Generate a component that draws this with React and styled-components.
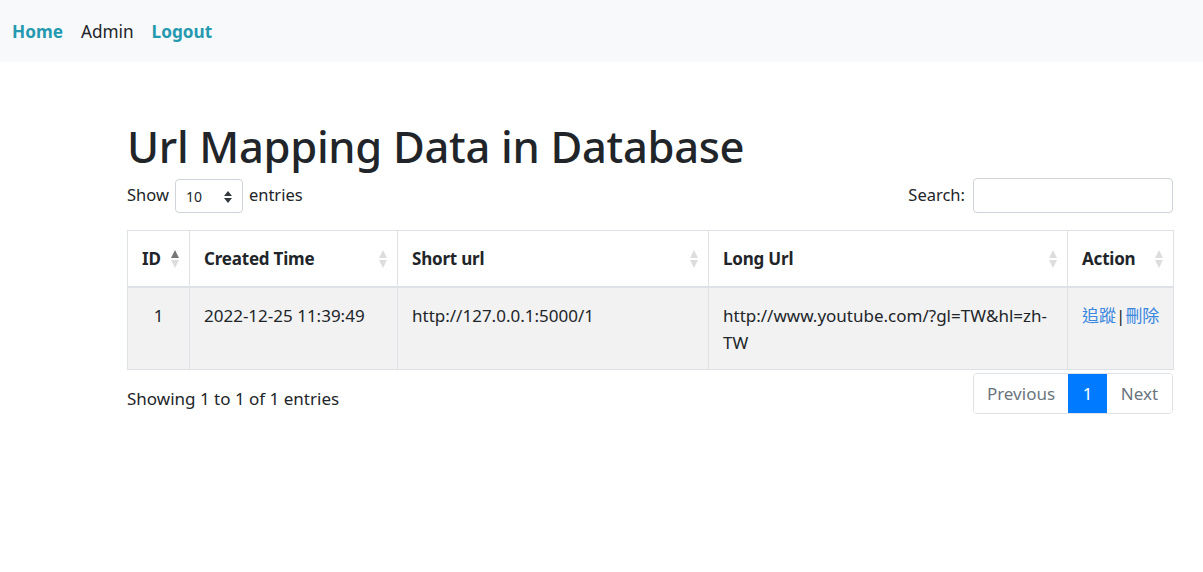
import React from 'react';
import styled, { createGlobalStyle } from 'styled-components';

const GlobalStyle = createGlobalStyle`
  body {
    margin: 0;
    font-family: "Noto Sans", "Noto Sans CJK TC", sans-serif;
    font-size: 16px;
    color: #212529;
    background: #fff;
  }
`;

const Navbar = styled.nav`
  display: flex;
  align-items: center;
  gap: 18px;
  height: 62px;
  padding: 0 12px;
  background: #f8f9fa;
`;

const NavLink = styled.a`
  font-size: 17.2px;
  font-weight: ${(p) => (p.active ? 400 : 700)};
  color: ${(p) => (p.active ? '#212529' : '#2599b0')};
  text-decoration: none;
`;

const Container = styled.main`
  padding: 58px 30px 0 127px;
`;

const Title = styled.h1`
  margin: 0 0 4px;
  font-size: 43.5px;
  font-weight: 500;
  line-height: 1.2;
  letter-spacing: -0.3px;
`;

const Controls = styled.div`
  display: flex;
  justify-content: space-between;
  align-items: center;
  margin-bottom: 17px;
`;

const Label = styled.label`
  display: flex;
  align-items: center;
  gap: 6px;
  font-size: 16.5px;
`;

const Select = styled.div`
  display: flex;
  align-items: center;
  justify-content: space-between;
  box-sizing: border-box;
  width: 68px;
  height: 34px;
  padding: 2px 10px 0 10px;
  border: 1px solid #ced4da;
  border-radius: 4px;
  font-size: 14px;
  margin-top: 2px;
`;

const Input = styled.input`
  box-sizing: border-box;
  width: 200px;
  height: 35px;
  border: 1px solid #ced4da;
  border-radius: 4px;
  margin: 2px 0 0 2px;
`;

const Table = styled.table`
  width: 100%;
  border-collapse: collapse;
  table-layout: fixed;
  border: 1px solid #dee2e6;
`;

const Th = styled.th`
  position: relative;
  height: 55px;
  padding: 0 14px;
  text-align: left;
  font-weight: 700;
  font-size: 17px;
  border: 1px solid #dee2e6;
  border-bottom: 2px solid #dee2e6;
  letter-spacing: -0.2px;
`;

const Td = styled.td`
  height: 82px;
  box-sizing: border-box;
  padding: 14px ${(p) => (p.tight ? 0 : 14)}px 0 14px;
  vertical-align: top;
  background: #f2f2f2;
  border: 1px solid #dee2e6;
  font-size: 17px;
  line-height: 27px;
  text-align: ${(p) => (p.center ? 'center' : 'left')};
  word-break: break-all;
  white-space: ${(p) => (p.tight ? 'nowrap' : 'normal')};
`;

const Sort = styled.svg`
  position: absolute;
  right: 9px;
  top: 50%;
  margin-top: -10px;
`;

const ActionLink = styled.a`
  color: #3a87e0;
  text-decoration: none;
`;

const Footer = styled.div`
  display: flex;
  justify-content: space-between;
  align-items: flex-start;
  margin-top: 3px;
`;

const Info = styled.div`
  padding-top: 14px;
  font-size: 17px;
`;

const Pager = styled.div`
  display: flex;
  border: 1px solid #dee2e6;
  border-radius: 4px;
  overflow: hidden;
  height: 41px;
  box-sizing: border-box;
`;

const PageBtn = styled.span`
  display: flex;
  align-items: center;
  justify-content: center;
  width: ${(p) => p.w}px;
  font-size: 17px;
  color: ${(p) => (p.active ? '#fff' : '#6c757d')};
  background: ${(p) => (p.active ? '#007bff' : '#fff')};
`;

const SortIcon = ({ asc }) => (
  <Sort width="10" height="20" viewBox="0 0 10 20">
    <path d="M5 1 L9 9 L1 9 Z" fill={asc ? '#777' : '#ddd'} />
    <path d="M5 19 L9 11 L1 11 Z" fill="#ddd" />
  </Sort>
);

const columns = [
  { label: 'ID', width: 62, asc: true },
  { label: 'Created Time', width: 208 },
  { label: 'Short url', width: 311 },
  { label: 'Long Url', width: 359 },
  { label: 'Action', width: 106 },
];

const App = () => (
  <>
    <GlobalStyle />
    <Navbar>
      <NavLink href="#">Home</NavLink>
      <NavLink href="#" active>
        Admin
      </NavLink>
      <NavLink href="#">Logout</NavLink>
    </Navbar>
    <Container>
      <Title>Url Mapping Data in Database</Title>
      <Controls>
        <Label>
          Show
          <Select>
            10
            <svg width="8" height="12" viewBox="0 0 8 12">
              <path d="M4 0 L8 5 L0 5 Z M4 12 L8 7 L0 7 Z" fill="#343a40" />
            </svg>
          </Select>
          entries
        </Label>
        <Label>
          Search:
          <Input type="text" />
        </Label>
      </Controls>
      <Table>
        <colgroup>
          {columns.map((c) => (
            <col key={c.label} style={{ width: c.width }} />
          ))}
        </colgroup>
        <thead>
          <tr>
            {columns.map((c) => (
              <Th key={c.label}>
                {c.label}
                <SortIcon asc={c.asc} />
              </Th>
            ))}
          </tr>
        </thead>
        <tbody>
          <tr>
            <Td center>1</Td>
            <Td>2022-12-25 11:39:49</Td>
            <Td>http://127.0.0.1:5000/1</Td>
            <Td>http://www.youtube.com/?gl=TW&amp;hl=zh-TW</Td>
            <Td tight>
              <ActionLink href="#">追蹤</ActionLink>|<ActionLink href="#">刪除</ActionLink>
            </Td>
          </tr>
        </tbody>
      </Table>
      <Footer>
        <Info>Showing 1 to 1 of 1 entries</Info>
        <Pager>
          <PageBtn w={94}>Previous</PageBtn>
          <PageBtn w={39} active>
            1
          </PageBtn>
          <PageBtn w={65}>Next</PageBtn>
        </Pager>
      </Footer>
    </Container>
  </>
);

export default App;
